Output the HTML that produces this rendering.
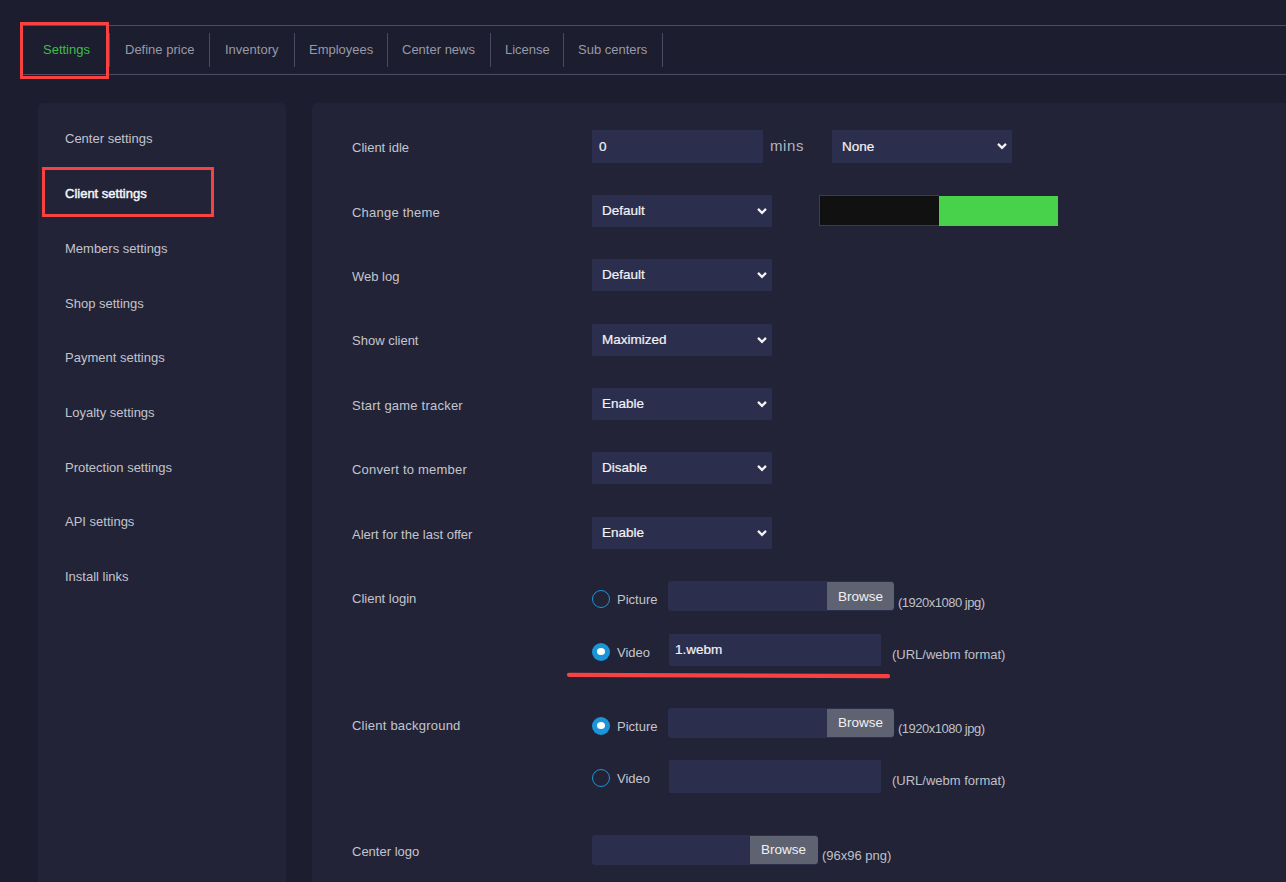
<!DOCTYPE html>
<html><head><meta charset="utf-8">
<style>
html,body{margin:0;padding:0;background:#1c1d2e;}
#root{position:relative;width:1286px;height:882px;overflow:hidden;background:#1c1d2e;font-family:"Liberation Sans",sans-serif;}
.a{position:absolute;}
.t{position:absolute;white-space:nowrap;font-size:13px;line-height:20px;}
.hl{position:absolute;left:23px;right:0;height:1px;background:#4c4d62;}
.vs{position:absolute;top:33px;width:1px;height:34px;background:#4a4b60;}
.tab{color:#989aa7;}
.side{color:#c2c3cc;left:65px;}
.lbl{color:#c4c5cd;left:352px;}
.inp{position:absolute;background:#2c2e4e;border-radius:1px;}
.sel{position:absolute;background:#2c2e4e;border-radius:1px;width:180px;height:32px;}
.stxt{color:#f2f2f4;font-size:13.5px;-webkit-text-stroke:0.2px #f2f2f4;}
.chev{position:absolute;width:10px;height:7px;}
.brw{position:absolute;background:#5f6271;border-radius:0 3px 3px 0;}
.btxt{color:#f0f0f2;font-size:13.5px;}
.hint{color:#bfc0c8;}
.jpg{letter-spacing:-0.5px;}
.rad{position:absolute;width:16px;height:16px;border:1.6px solid #1a95d8;border-radius:50%;}
.radc{position:absolute;width:18px;height:18px;background:#1a95d8;border-radius:50%;}
.radc::after{content:"";position:absolute;left:5px;top:4.9px;width:8px;height:7px;border-radius:50%;background:#fff;}
.red{position:absolute;border:3px solid #f84242;}
</style></head>
<body><div id="root">

<!-- Tabs -->
<div class="hl" style="top:25px"></div>
<div class="hl" style="top:74px"></div>
<div class="vs" style="left:109px"></div>
<div class="vs" style="left:209px"></div>
<div class="vs" style="left:294px"></div>
<div class="vs" style="left:387px"></div>
<div class="vs" style="left:490px"></div>
<div class="vs" style="left:563px"></div>
<div class="vs" style="left:662px"></div>
<div class="t" style="left:43px;top:40px;color:#3dbf4a">Settings</div>
<div class="t tab" style="left:125px;top:40px">Define price</div>
<div class="t tab" style="left:225px;top:40px">Inventory</div>
<div class="t tab" style="left:309px;top:40px">Employees</div>
<div class="t tab" style="left:402px;top:40px">Center news</div>
<div class="t tab" style="left:505px;top:40px">License</div>
<div class="t tab" style="left:578px;top:40px">Sub centers</div>
<div class="red" style="left:20px;top:22px;width:83px;height:51px"></div>

<!-- Sidebar -->
<div class="a" style="left:38px;top:103px;width:248px;height:800px;background:#222337;border-radius:5px"></div>
<div class="t side" style="top:129px">Center settings</div>
<div class="t side" style="top:184px;color:#f6f6f8;-webkit-text-stroke:0.45px #f6f6f8">Client settings</div>
<div class="t side" style="top:239px">Members settings</div>
<div class="t side" style="top:294px">Shop settings</div>
<div class="t side" style="top:348px">Payment settings</div>
<div class="t side" style="top:403px">Loyalty settings</div>
<div class="t side" style="top:458px">Protection settings</div>
<div class="t side" style="top:512px">API settings</div>
<div class="t side" style="top:567px">Install links</div>
<div class="red" style="left:42px;top:167px;width:166px;height:44px"></div>

<!-- Main panel -->
<div class="a" style="left:312px;top:103px;width:1000px;height:800px;background:#222337;border-radius:5px"></div>

<!-- labels -->
<div class="t lbl" style="top:138px">Client idle</div>
<div class="t lbl" style="letter-spacing:0.22px;top:203px">Change theme</div>
<div class="t lbl" style="top:267px">Web log</div>
<div class="t lbl" style="top:331px">Show client</div>
<div class="t lbl" style="letter-spacing:0.22px;top:396px">Start game tracker</div>
<div class="t lbl" style="letter-spacing:0.22px;top:460px">Convert to member</div>
<div class="t lbl" style="top:525px">Alert for the last offer</div>
<div class="t lbl" style="top:589px">Client login</div>
<div class="t lbl" style="letter-spacing:0.22px;top:716px">Client background</div>
<div class="t lbl" style="top:842px">Center logo</div>

<!-- row 1 -->
<div class="inp" style="left:592px;top:130px;width:171px;height:33px"></div>
<div class="t stxt" style="left:599px;top:137px">0</div>
<div class="t" style="left:770px;top:136px;color:#b4b5c0;font-size:15px;letter-spacing:0.6px">mins</div>
<div class="sel" style="left:832px;top:130px;height:33px"></div>
<div class="t stxt" style="left:842px;top:137px">None</div>
<svg class="chev" style="left:997px;top:143px" viewBox="0 0 10 7"><path d="M1 0.9 L5 4.9 L9 0.9" fill="none" stroke="#f4f4f6" stroke-width="2.2"/></svg>

<!-- row 2 theme -->
<div class="sel" style="left:592px;top:195px"></div>
<div class="t stxt" style="left:602px;top:201px">Default</div>
<svg class="chev" style="left:757px;top:208px" viewBox="0 0 10 7"><path d="M1 0.9 L5 4.9 L9 0.9" fill="none" stroke="#f4f4f6" stroke-width="2.2"/></svg>
<div class="a" style="left:819px;top:195px;width:119px;height:29px;background:#111112;border:1px solid #3a3b58;border-right:none"></div>
<div class="a" style="left:939px;top:196px;width:119px;height:30px;background:#48d24b"></div>

<!-- selects -->
<div class="sel" style="left:592px;top:259px"></div>
<div class="t stxt" style="left:602px;top:265px">Default</div>
<svg class="chev" style="left:757px;top:272px" viewBox="0 0 10 7"><path d="M1 0.9 L5 4.9 L9 0.9" fill="none" stroke="#f4f4f6" stroke-width="2.2"/></svg>

<div class="sel" style="left:592px;top:324px"></div>
<div class="t stxt" style="left:602px;top:330px">Maximized</div>
<svg class="chev" style="left:757px;top:337px" viewBox="0 0 10 7"><path d="M1 0.9 L5 4.9 L9 0.9" fill="none" stroke="#f4f4f6" stroke-width="2.2"/></svg>

<div class="sel" style="left:592px;top:388px"></div>
<div class="t stxt" style="left:602px;top:394px">Enable</div>
<svg class="chev" style="left:757px;top:401px" viewBox="0 0 10 7"><path d="M1 0.9 L5 4.9 L9 0.9" fill="none" stroke="#f4f4f6" stroke-width="2.2"/></svg>

<div class="sel" style="left:592px;top:452px"></div>
<div class="t stxt" style="left:602px;top:458px">Disable</div>
<svg class="chev" style="left:757px;top:465px" viewBox="0 0 10 7"><path d="M1 0.9 L5 4.9 L9 0.9" fill="none" stroke="#f4f4f6" stroke-width="2.2"/></svg>

<div class="sel" style="left:592px;top:517px"></div>
<div class="t stxt" style="left:602px;top:523px">Enable</div>
<svg class="chev" style="left:757px;top:530px" viewBox="0 0 10 7"><path d="M1 0.9 L5 4.9 L9 0.9" fill="none" stroke="#f4f4f6" stroke-width="2.2"/></svg>

<!-- client login -->
<div class="rad" style="left:592px;top:590px"></div>
<div class="t lbl" style="left:617px;top:590px">Picture</div>
<div class="inp" style="left:668px;top:581px;width:226px;height:30px;border-radius:3px"></div>
<div class="brw" style="left:827px;top:582px;width:67px;height:28px"></div>
<div class="t btxt" style="left:838px;top:587px">Browse</div>
<div class="t hint jpg" style="left:898px;top:593px">(1920x1080 jpg)</div>

<div class="radc" style="left:592px;top:643px"></div>
<div class="t lbl" style="left:617px;top:643px">Video</div>
<div class="inp" style="left:669px;top:634px;width:212px;height:32px"></div>
<div class="t stxt" style="left:675px;top:640px">1.webm</div>
<div class="t hint" style="left:892px;top:645px">(URL/webm format)</div>
<svg class="a" style="left:560px;top:665px" width="340" height="20" viewBox="560 665 340 20"><path d="M569 674.8 Q 730 674.9 888 676.2" fill="none" stroke="#f84242" stroke-width="4.2" stroke-linecap="round"/></svg>

<!-- client background -->
<div class="radc" style="left:592px;top:717px"></div>
<div class="t lbl" style="left:617px;top:717px">Picture</div>
<div class="inp" style="left:668px;top:708px;width:226px;height:30px;border-radius:3px"></div>
<div class="brw" style="left:827px;top:709px;width:67px;height:28px"></div>
<div class="t btxt" style="left:838px;top:713px">Browse</div>
<div class="t hint jpg" style="left:898px;top:719px">(1920x1080 jpg)</div>

<div class="rad" style="left:592px;top:769px"></div>
<div class="t lbl" style="left:617px;top:769px">Video</div>
<div class="inp" style="left:669px;top:760px;width:212px;height:33px"></div>
<div class="t hint" style="left:892px;top:771px">(URL/webm format)</div>

<!-- center logo -->
<div class="inp" style="left:592px;top:835px;width:226px;height:30px;border-radius:3px"></div>
<div class="brw" style="left:750px;top:836px;width:68px;height:28px"></div>
<div class="t btxt" style="left:761px;top:840px">Browse</div>
<div class="t hint" style="left:822px;top:846px">(96x96 png)</div>

</div></body></html>
